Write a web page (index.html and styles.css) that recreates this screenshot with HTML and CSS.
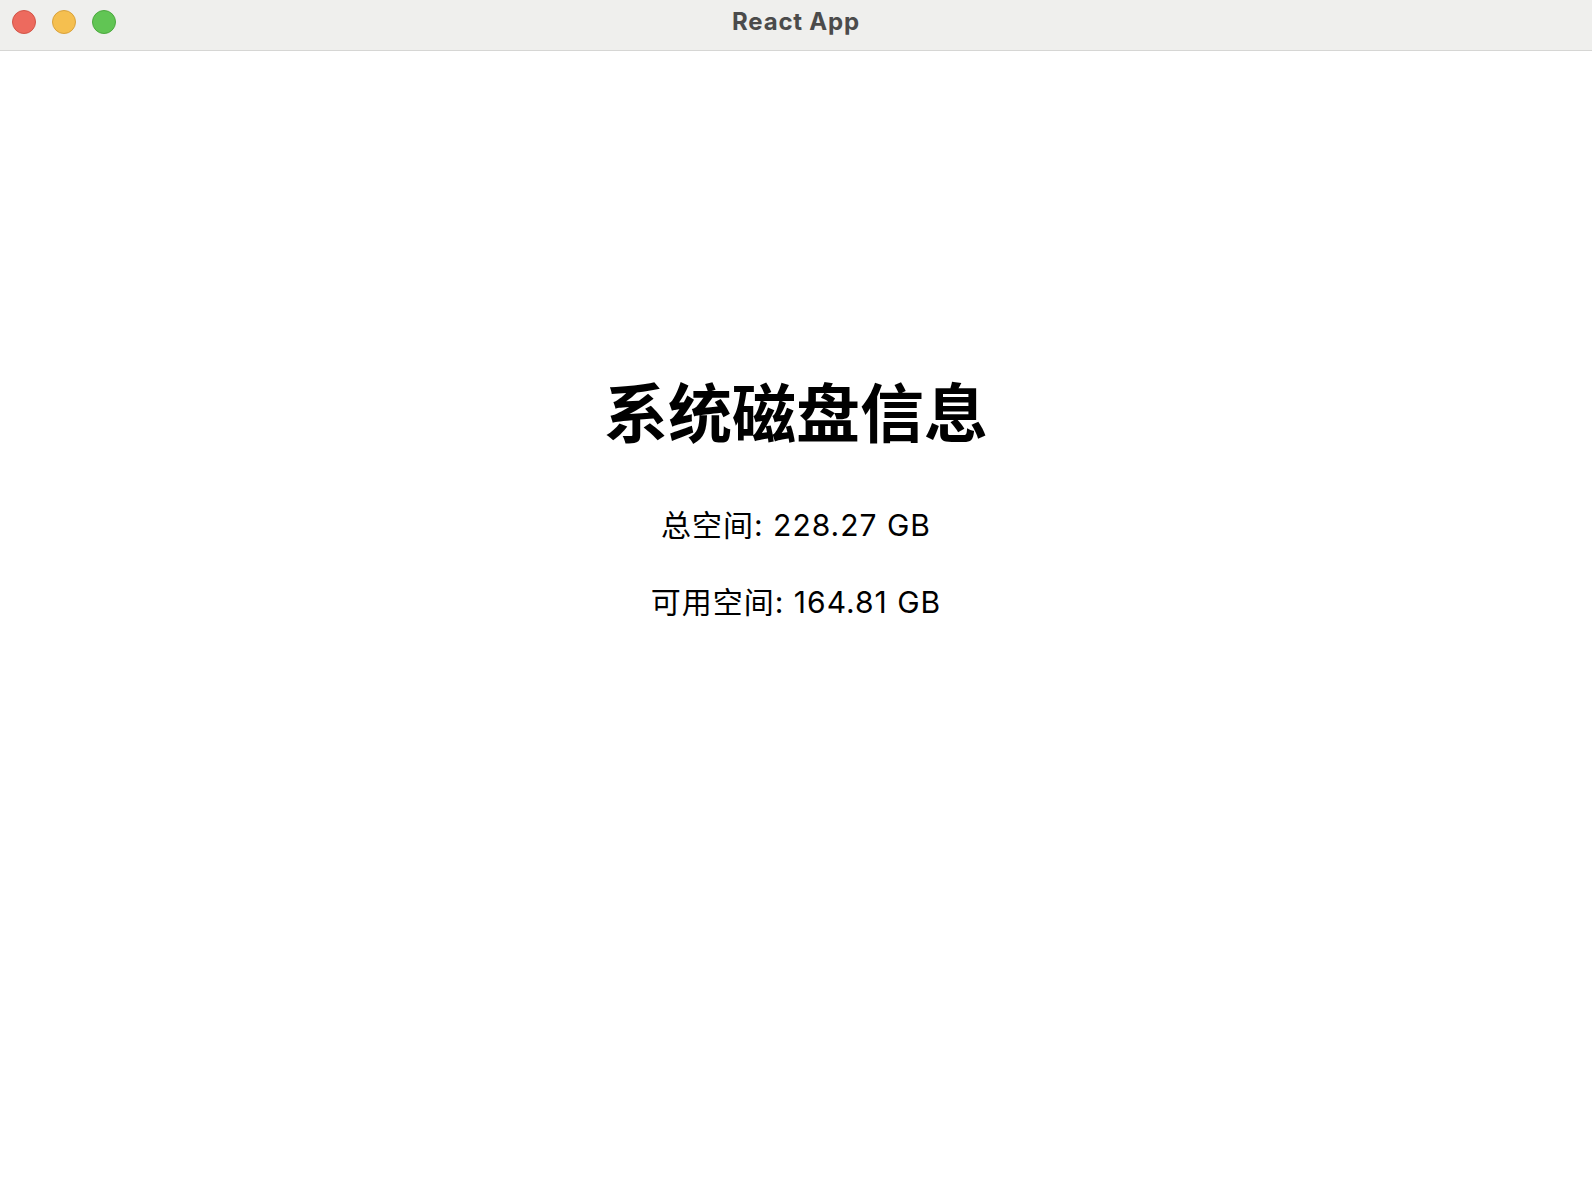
FILE: index.html
```html
<!DOCTYPE html>
<html lang="zh-CN">
<head>
<meta charset="utf-8">
<title>React App</title>
<link rel="stylesheet" href="styles.css">
</head>
<body>
<div class="window">
  <header class="titlebar">
    <div class="lights">
      <span class="light red"></span>
      <span class="light yellow"></span>
      <span class="light green"></span>
    </div>
    <div class="title">React App</div>
  </header>
  <main class="content">
    <h1 class="heading">系统磁盘信息</h1>
    <p class="info">总空间: 228.27 GB</p>
    <p class="info">可用空间: 164.81 GB</p>
  </main>
</div>
</body>
</html>
```
FILE: styles.css
```css
html, body {
  margin: 0;
  padding: 0;
  background: #ffffff;
}
body {
  font-family: Inter, "Noto Sans CJK SC", sans-serif;
  color: #000;
}
.window {
  display: flex;
  flex-direction: column;
  min-height: 100vh;
}
.titlebar {
  position: relative;
  height: 51px;
  box-sizing: border-box;
  padding-bottom: 8px;
  background: #efefed;
  border-bottom: 1px solid #d6d6d4;
  display: flex;
  align-items: center;
  justify-content: center;
}
.lights {
  position: absolute;
  left: 12px;
  top: 10px;
  display: flex;
  gap: 16px;
}
.light {
  width: 24px;
  height: 24px;
  border-radius: 50%;
  box-sizing: border-box;
}
.red { background: #ed6a5e; border: 1px solid #d25548; }
.yellow { background: #f5bf4f; border: 1px solid #d9a23c; }
.green { background: #61c554; border: 1px solid #4ca93f; }
.title {
  font-size: 24px;
  font-weight: 700;
  letter-spacing: 0.8px;
  color: #4b4b4b;
}
.content {
  flex: 1;
  text-align: center;
  padding-top: 325px;
}
.heading {
  margin: 0 0 53px;
  font-size: 64px;
  line-height: 76px;
  font-weight: 700;
}
.info {
  margin: 0 0 37px;
  font-size: 30px;
  line-height: 40px;
  letter-spacing: 1px;
}
```
